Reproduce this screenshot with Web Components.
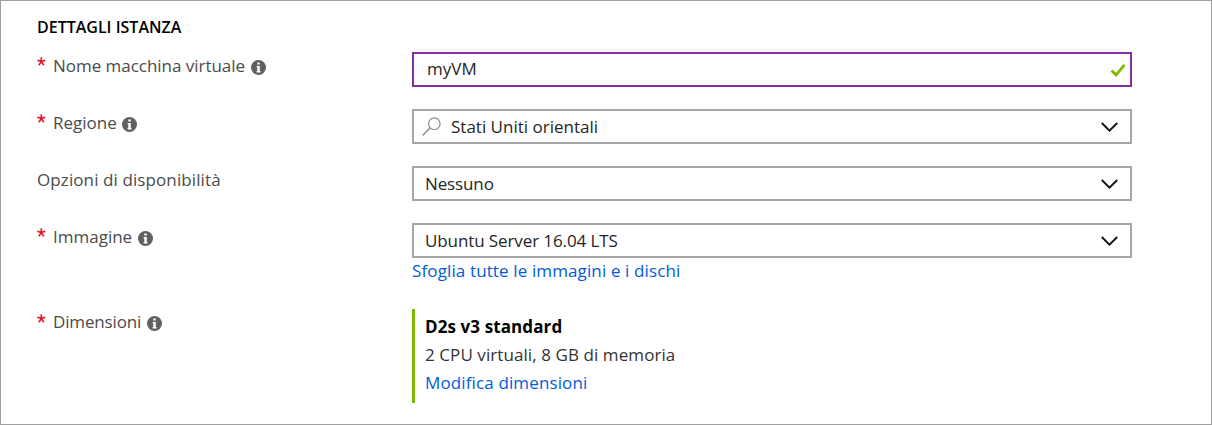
<!DOCTYPE html>
<html lang="it">
<head>
<meta charset="utf-8">
<title>Dettagli istanza</title>
<style>
html,body{margin:0;height:100%;background:#fff}
body{font:17px/28px "Open Sans","Noto Sans",sans-serif;color:#4b4b4b}
</style>
</head>
<body>
<instance-panel>
  <span slot="title">DETTAGLI ISTANZA</span>
  <form-row required info><span slot="label" style="letter-spacing:-.03px">Nome macchina virtuale</span><text-box>myVM</text-box></form-row>
  <form-row required info><span slot="label">Regione</span><drop-down search>Stati Uniti orientali</drop-down></form-row>
  <form-row><span slot="label" style="letter-spacing:.1px">Opzioni di disponibilità</span><drop-down style="letter-spacing:-.12px">Nessuno</drop-down></form-row>
  <form-row required info class="tall"><span slot="label">Immagine</span><drop-down style="letter-spacing:-.1px">Ubuntu Server 16.04 LTS</drop-down><link-text style="letter-spacing:.125px;line-height:26px">Sfoglia tutte le immagini e i dischi</link-text></form-row>
  <form-row required info style="--label-line:25px;--icon-top:7px"><span slot="label" style="letter-spacing:-.15px">Dimensioni</span><size-card><b slot="name" style="letter-spacing:.1px">D2s v3 standard</b><span style="letter-spacing:.08px">2 CPU virtuali, 8 GB di memoria</span><link-text style="letter-spacing:.13px">Modifica dimensioni</link-text></size-card></form-row>
</instance-panel>
<script>
const define=(name,html)=>customElements.define(name,class extends HTMLElement{
  constructor(){super();this.attachShadow({mode:'open'}).innerHTML=html;}
});
define('instance-panel',`<style>
:host{display:block;box-sizing:border-box;height:425px;border:1px solid #a0a0a0;padding:11px 79px 0 36px}
h2{margin:0 0 10px;font-size:16px;line-height:30px;font-weight:600;color:#000}
.rows{display:grid;row-gap:22px}
</style><h2><slot name="title"></slot></h2><div class="rows"><slot></slot></div>`);
define('form-row',`<style>
:host{display:grid;grid-template-columns:375px 1fr}
:host(.tall){height:64px}
.label{display:flex;align-items:flex-start;line-height:var(--label-line,27px)}
.star{display:none;width:9px;height:9px;margin:5px 7px 0 0;flex:none}
:host([required]) .star{display:block}
.info{display:none;width:15px;height:15px;margin:var(--icon-top,8px) 0 0 5.6px;flex:none}
:host([info]) .info{display:block}
</style><div class="label">
<svg class="star" viewBox="0 0 9 9"><path d="M4.3 4.6V.2M4.3 4.6L.3 3.2M4.3 4.6l4-1.4M4.3 4.6L1.8 8.2M4.3 4.6l2.5 3.6" stroke="#e81123" stroke-width="1.6"/></svg>
<slot name="label"></slot>
<svg class="info" viewBox="0 0 15 15"><circle cx="7.5" cy="7.5" r="7.5" fill="#606060"/><path d="M6.3 2.6h2.5v2H6.3zM5.6 6h3.2v5h.7v1.4H5.6V11h.7V7.3h-.7z" fill="#fff"/></svg>
</div><div><slot></slot></div>`);
define('text-box',`<style>
:host{display:flex;box-sizing:border-box;height:35px;border:2px solid #8a2da5;padding:0 4px 0 13px;align-items:center;justify-content:space-between;color:#252525}
div{padding-bottom:2px}
svg{width:16px;height:14px}
</style><div><slot></slot></div><svg viewBox="0 0 16 14"><path d="M1.5 7.4l4.6 4.5L14.5 1.9" fill="none" stroke="#7fba00" stroke-width="2.8"/></svg>`);
define('drop-down',`<style>
:host{display:flex;box-sizing:border-box;height:35px;border:2px solid #a6a6a6;padding:0 12px 0 11px;align-items:center;color:#252525}
.search{display:none;width:19px;height:19px;margin:0 10px 0 -3px}
:host([search]) .search{display:block}
.chev{width:17px;height:10px;margin-left:auto}
</style><svg class="search" viewBox="0 0 19 19"><circle cx="12.3" cy="6.7" r="5.8" fill="none" stroke="#8c8c8c" stroke-width="1.2"/><path d="M8.2 10.8L.6 18.4" stroke="#8c8c8c" stroke-width="1.4"/></svg>
<slot></slot><svg class="chev" viewBox="0 0 17 10"><path d="M.8 1l7.7 7.6L16.2 1" fill="none" stroke="#111" stroke-width="1.9"/></svg>`);
define('link-text',`<style>:host{display:block;color:#015cda}</style><slot></slot>`);
define('size-card',`<style>
:host{display:flex;flex-direction:column;box-sizing:border-box;height:94px;border-left:3px solid #7fba00;padding:4px 0 0 10px;color:#333}
::slotted(b){color:#000}
</style><slot name="name"></slot><slot></slot>`);
</script>
</body>
</html>
